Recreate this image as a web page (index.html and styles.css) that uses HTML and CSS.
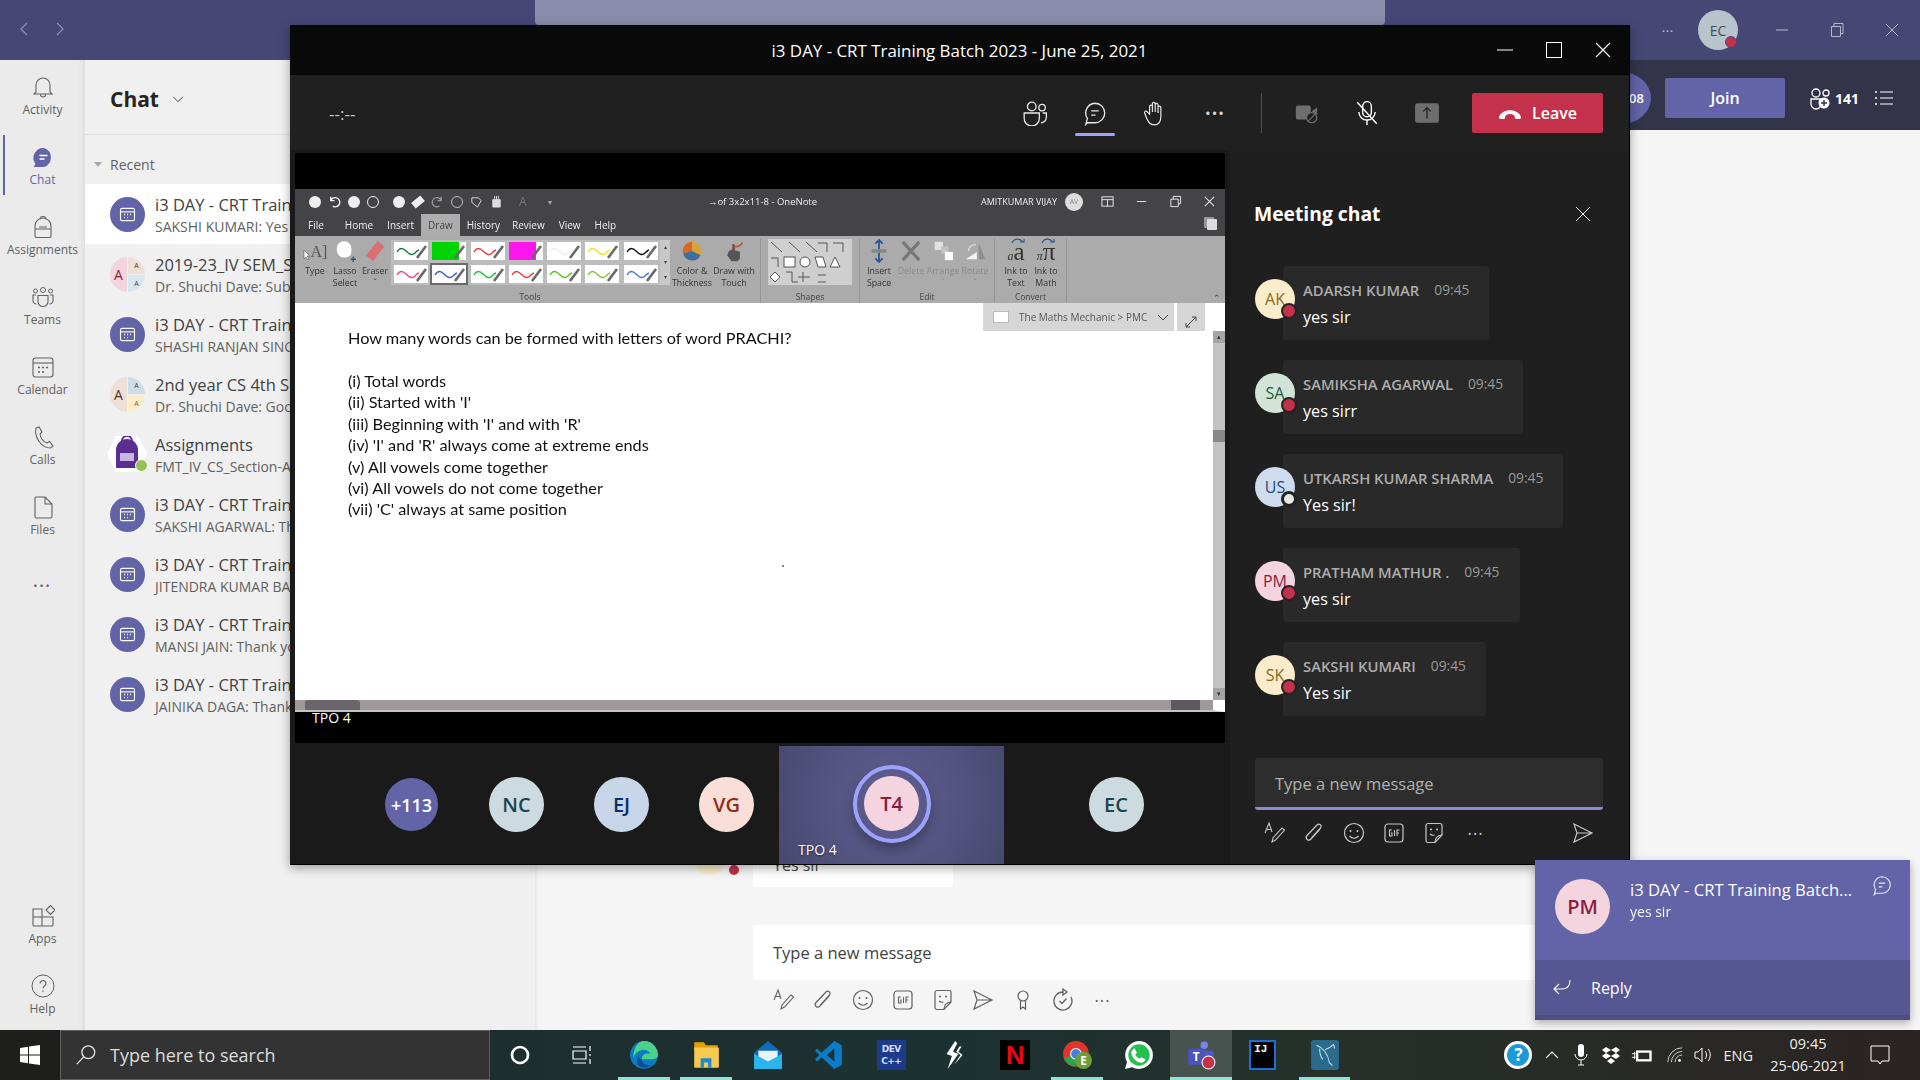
FILE: index.html
```html
<!DOCTYPE html>
<html lang="en">
<head>
<meta charset="utf-8">
<title>Microsoft Teams</title>
<link rel="stylesheet" href="styles.css">
</head>
<body>
<svg class="sprite" aria-hidden="true">
  <symbol id="cal" viewBox="0 0 24 24"><rect x="4" y="5" width="16" height="14" rx="2" fill="none" stroke="currentColor" stroke-width="1.3"/><path d="M4 9h16" stroke="currentColor" stroke-width="1.3"/><path d="M8 12h1M11.5 12h1M15 12h1M8 15.5h1M11.5 15.5h1" stroke="currentColor" stroke-width="1.5"/></symbol>
  <symbol id="chatb" viewBox="0 0 24 24"><path d="M12 3a9 9 0 0 1 0 18H5l-1.5 1.5L5 17a9 9 0 0 1 7-14z" fill="none" stroke="currentColor" stroke-width="1.2"/><path d="M8.5 10h7M8.5 14h4" stroke="currentColor" stroke-width="1.2"/></symbol>
  <symbol id="pen" viewBox="0 0 34 18"><path d="M3 10c3-5 6-4 9-1s6 5 9 2 3-3 4-3" fill="none" stroke="currentColor" stroke-width="1.4"/><path d="M23 16 32 4" stroke="#6a6a6a" stroke-width="2.6"/></symbol>
  <symbol id="format" viewBox="0 0 24 24"><path d="M3 12 7 2l3 9M4.500 8.500h4" fill="none" stroke="currentColor" stroke-width="1.1"/><path d="M10 21l1-4 9-10 2.500 2-9 10z" fill="none" stroke="currentColor" stroke-width="1.1"/></symbol>
  <symbol id="clip" viewBox="0 0 24 24"><path d="M18 8 9 18c-2.500 2.800-6.500-.5-4-3.500L15 4c2-2 5.500.5 3.500 3L9.500 17" fill="none" stroke="currentColor" stroke-width="1.2"/></symbol>
  <symbol id="smile" viewBox="0 0 24 24"><circle cx="12" cy="12" r="9.500" fill="none" stroke="currentColor" stroke-width="1.2"/><circle cx="8.500" cy="10" r="1" fill="currentColor"/><circle cx="15.500" cy="10" r="1" fill="currentColor"/><path d="M7.500 15c2.500 3 6.500 3 9 0" fill="none" stroke="currentColor" stroke-width="1.2"/></symbol>
  <symbol id="gif" viewBox="0 0 24 24"><rect x="3" y="3" width="18" height="18" rx="3" fill="none" stroke="currentColor" stroke-width="1.2"/><path d="M10 9H7.500v6H10v-3H9M12.500 9v6M15 15V9h2.500M15 12h2" fill="none" stroke="currentColor" stroke-width="1.1"/></symbol>
  <symbol id="sticker" viewBox="0 0 24 24"><path d="M6 2.500h12a2 2 0 0 1 2 2V14l-7 7.500H6a2 2 0 0 1-2-2v-15a2 2 0 0 1 2-2z" fill="none" stroke="currentColor" stroke-width="1.2"/><path d="M13 21.500c0-5 2-7 7-7.500" fill="none" stroke="currentColor" stroke-width="1.2"/><circle cx="9" cy="8.500" r="1" fill="currentColor"/><circle cx="15" cy="8.500" r="1" fill="currentColor"/><path d="M8 13c1.500 1.500 3 1.500 4.500 1" fill="none" stroke="currentColor" stroke-width="1.1"/></symbol>
  <symbol id="send" viewBox="0 0 24 24"><path d="M3 3 21 12 3 21l3-9zM6 12h15" fill="none" stroke="currentColor" stroke-width="1.2"/></symbol>
</svg>

<div class="app">
  <header class="topbar">
    <div class="nav-arrows">
      <svg viewBox="0 0 12 16" class="nav-ic"><path d="M9 2 3 8l6 6" fill="none" stroke="currentColor" stroke-width="1.200"/></svg>
      <svg viewBox="0 0 12 16" class="nav-ic"><path d="M3 2l6 6-6 6" fill="none" stroke="currentColor" stroke-width="1.200"/></svg>
    </div>
    <div class="searchbox"></div>
    <div class="top-right">
      <span class="top-dots">&#8226;&#8226;&#8226;</span>
      <span class="me-av">EC<i class="me-dot"></i></span>
      <svg viewBox="0 0 16 16" class="win-ic first"><path d="M2 8h12" stroke="currentColor"/></svg>
      <svg viewBox="0 0 16 16" class="win-ic"><path d="M2.500 4.500h9v10h-9zM5 4.500v-3h9v10h-2.500" fill="none" stroke="currentColor"/></svg>
      <svg viewBox="0 0 16 16" class="win-ic"><path d="M2 2l12 12M14 2 2 14" stroke="currentColor"/></svg>
    </div>
  </header>

  <div class="workspace">
    <nav class="rail">
      <a class="rail-item"><svg viewBox="0 0 24 24" class="rail-ic"><path d="M5 17V10a7 7 0 0 1 14 0v7l2 2H3zM9.500 19.500a2.500 2.500 0 0 0 5 0" fill="none" stroke="currentColor" stroke-width="1.100"/></svg><span>Activity</span></a>
      <a class="rail-item active"><svg viewBox="0 0 24 24" class="rail-ic"><path d="M13 3a10 10 0 0 1 0 19H2.500l2-3A10 10 0 0 1 13 3z" fill="#6264a7"/><path d="M8.500 10.500h8M8.500 14h5" stroke="#fff" stroke-width="1.300"/></svg><span>Chat</span></a>
      <a class="rail-item"><svg viewBox="0 0 24 24" class="rail-ic"><path d="M4 11a8 8 0 0 1 16 0v10a1.500 1.500 0 0 1-1.500 1.500h-13A1.500 1.500 0 0 1 4 21zM9 4.500a3 3 0 0 1 6 0M4 14h16M8 12h8" fill="none" stroke="currentColor" stroke-width="1.100"/></svg><span>Assignments</span></a>
      <a class="rail-item"><svg viewBox="0 0 24 24" class="rail-ic"><circle cx="12" cy="5" r="2.500" fill="none" stroke="currentColor"/><circle cx="4.500" cy="6" r="2" fill="none" stroke="currentColor"/><circle cx="19.500" cy="6" r="2" fill="none" stroke="currentColor"/><path d="M7 10.500h10v6a5 5 0 0 1-10 0zM5 10H2v6c0 1.500 1.500 3 3.500 3M19 10h3v6c0 1.500-1.500 3-3.500 3" fill="none" stroke="currentColor" stroke-width="1.100"/></svg><span>Teams</span></a>
      <a class="rail-item"><svg viewBox="0 0 24 24" class="rail-ic"><rect x="2" y="3" width="20" height="19" rx="2.500" fill="none" stroke="currentColor" stroke-width="1.100"/><path d="M2 8h20" stroke="currentColor" stroke-width="1.100"/><path d="M7 12.500h2M11 12.500h2M15 12.500h2M7 17h2M11 17h2" stroke="currentColor" stroke-width="1.600"/></svg><span>Calendar</span></a>
      <a class="rail-item"><svg viewBox="0 0 24 24" class="rail-ic"><path d="M5 3l3-1 3 5-2 2c.5 4 3 7.500 7 9l2.500-1.500 3.500 4.500-2.500 2C11 23 3 13 5 3z" fill="none" stroke="currentColor" stroke-width="1.100"/></svg><span>Calls</span></a>
      <a class="rail-item"><svg viewBox="0 0 24 24" class="rail-ic"><path d="M4 3.500A1.500 1.500 0 0 1 5.500 2H14l7 7v12.500a1.500 1.500 0 0 1-1.500 1.500h-14A1.500 1.500 0 0 1 4 21.500zM14 2v7h7" fill="none" stroke="currentColor" stroke-width="1.100"/></svg><span>Files</span></a>
      <a class="rail-dots">&#8226;&#8226;&#8226;</a>
      <div class="rail-spacer"></div>
      <a class="rail-item short"><svg viewBox="0 0 24 24" class="rail-ic"><path d="M2 5h9v17H3a1 1 0 0 1-1-1zM2 13h20v8a1 1 0 0 1-1 1H11M11 13v-2M15 6l4.500-4.500L24 6l-4.500 4.500z" fill="none" stroke="currentColor" stroke-width="1.100"/></svg><span>Apps</span></a>
      <a class="rail-item short"><svg viewBox="0 0 24 24" class="rail-ic"><circle cx="12" cy="12" r="11" fill="none" stroke="currentColor" stroke-width="1"/><path d="M9 9.500a3 3 0 1 1 4.500 2.600c-1 .6-1.500 1.200-1.500 2.400M12 16.500v1.500" fill="none" stroke="currentColor" stroke-width="1.100"/></svg><span>Help</span></a>
    </nav>

    <section class="list-col">
      <div class="list-head"><h1>Chat</h1><svg viewBox="0 0 16 16" class="chev"><path d="M2.500 5.500 8 11l5.500-5.500" fill="none" stroke="currentColor" stroke-width="1.100"/></svg></div>
      <div class="recent"><i class="tri"></i>Recent</div>
      <div class="row selected"><span class="av-cal"><svg class="cal-ic"><use href="#cal"/></svg></span><div class="row-text"><div class="row-title">i3 DAY - CRT Training Batch 2023</div><div class="row-sub">SAKSHI KUMARI: Yes sir</div></div></div>
      <div class="row"><span class="av-group"><b class="g-main pink">A</b><b class="g-a">A</b><b class="g-b">A</b></span><div class="row-text"><div class="row-title">2019-23_IV SEM_Section</div><div class="row-sub">Dr. Shuchi Dave: Submit</div></div></div>
      <div class="row"><span class="av-cal"><svg class="cal-ic"><use href="#cal"/></svg></span><div class="row-text"><div class="row-title">i3 DAY - CRT Training Batch 2023</div><div class="row-sub">SHASHI RANJAN SINGH: Thank you</div></div></div>
      <div class="row"><span class="av-group"><b class="g-main tan">A</b><b class="g-c">A</b><b class="g-d">A</b></span><div class="row-text"><div class="row-title">2nd year CS 4th Sem</div><div class="row-sub">Dr. Shuchi Dave: Good</div></div></div>
      <div class="row"><span class="av-hex"><svg viewBox="0 0 40 36" class="hex"><path d="M9 0h22l9 18-9 18H9L0 18z" fill="#fff"/><path d="M9 14a11 11 0 0 1 22 0v17a1 1 0 0 1-1 1H10a1 1 0 0 1-1-1z" fill="#5c2d91"/><path d="M15 5a5 5 0 0 1 10 0" fill="none" stroke="#5c2d91" stroke-width="2"/><path d="M13 17h14v8H13z" fill="#c8b6e2"/></svg><i class="hex-ok"></i></span><div class="row-text"><div class="row-title">Assignments</div><div class="row-sub">FMT_IV_CS_Section-A</div></div></div>
      <div class="row"><span class="av-cal"><svg class="cal-ic"><use href="#cal"/></svg></span><div class="row-text"><div class="row-title">i3 DAY - CRT Training Batch 2023</div><div class="row-sub">SAKSHI AGARWAL: Thank you</div></div></div>
      <div class="row"><span class="av-cal"><svg class="cal-ic"><use href="#cal"/></svg></span><div class="row-text"><div class="row-title">i3 DAY - CRT Training Batch 2023</div><div class="row-sub">JITENDRA KUMAR BAIRWA: Thank</div></div></div>
      <div class="row"><span class="av-cal"><svg class="cal-ic"><use href="#cal"/></svg></span><div class="row-text"><div class="row-title">i3 DAY - CRT Training Batch 2023</div><div class="row-sub">MANSI JAIN: Thank you sir</div></div></div>
      <div class="row"><span class="av-cal"><svg class="cal-ic"><use href="#cal"/></svg></span><div class="row-text"><div class="row-title">i3 DAY - CRT Training Batch 2023</div><div class="row-sub">JAINIKA DAGA: Thank you</div></div></div>
    </section>

    <main class="main">
      <div class="main-head">
        <span class="count-pill">108</span>
        <button class="join">Join</button>
        <svg viewBox="0 0 24 24" class="ppl-ic"><circle cx="8" cy="7" r="4" fill="none" stroke="currentColor" stroke-width="1.300"/><circle cx="18" cy="7" r="3" fill="none" stroke="currentColor" stroke-width="1.300"/><path d="M3 13h10v5a5 5 0 0 1-10 0z" fill="none" stroke="currentColor" stroke-width="1.300"/><circle cx="16" cy="17" r="5.500" fill="#fff"/><path d="M16 14v6M13 17h6" stroke="#33344a" stroke-width="1.400"/></svg>
        <b class="ppl-count">141</b>
        <svg viewBox="0 0 20 20" class="list-ic"><path d="M6 4h13M6 10h13M6 16h13" stroke="currentColor" stroke-width="1.200"/><path d="M1 4h2M1 10h2M1 16h2" stroke="currentColor" stroke-width="1.600"/></svg>
      </div>
      <div class="convo">
        <div class="msg-line"><span class="msg-av"><i class="msg-dot"></i></span><div class="msg-bubble">Yes sir</div></div>
        <div class="compose">Type a new message</div>
        <div class="compose-tools">
          <svg class="ct"><use href="#format"/></svg><svg class="ct"><use href="#clip"/></svg><svg class="ct"><use href="#smile"/></svg><svg class="ct"><use href="#gif"/></svg><svg class="ct"><use href="#sticker"/></svg><svg class="ct"><use href="#send"/></svg>
          <svg class="ct" viewBox="0 0 24 24"><circle cx="12" cy="8" r="5" fill="none" stroke="currentColor" stroke-width="1.200"/><path d="M9.500 12.500V21l2.500-2 2.500 2v-8.500" fill="none" stroke="currentColor" stroke-width="1.200"/></svg>
          <svg class="ct" viewBox="0 0 24 24"><path d="M12 4a9 9 0 1 0 8 5M12 1v6l4-3z" fill="none" stroke="currentColor" stroke-width="1.300"/><path d="M8.500 13l2.500 2.500 4.500-5" fill="none" stroke="currentColor" stroke-width="1.300"/></svg>
          <span class="ct-dots">&#8226;&#8226;&#8226;</span>
        </div>
      </div>
    </main>
  </div>

  <footer class="taskbar">
    <div class="start"><svg viewBox="0 0 20 20" class="win-logo"><path d="M0 3l8-1.200V9.500H0zM9 1.600 20 0v9.500H9zM0 10.500h8v7.700L0 17zM9 10.500h11V20L9 18.400z" fill="#fff"/></svg></div>
    <div class="tb-search"><svg viewBox="0 0 24 24" class="tb-mag"><circle cx="14.500" cy="9" r="7" fill="none" stroke="currentColor" stroke-width="1.400"/><path d="M9.500 14 2 22" stroke="currentColor" stroke-width="1.400"/></svg><span>Type here to search</span></div>
    <div class="tb-apps">
      <span class="tb-app"><svg viewBox="0 0 24 24" class="tb-ic"><circle cx="12" cy="12" r="8" fill="none" stroke="#fff" stroke-width="2.600"/></svg></span>
      <span class="tb-app"><svg viewBox="0 0 24 24" class="tb-ic"><path d="M3 4h13M3 20h13M3 8h13v8H3zM20 3v5M20 11v2M20 16v5" fill="none" stroke="#fff" stroke-width="1.200"/></svg></span>
      <span class="tb-app open"><svg viewBox="0 0 28 28" class="tb-ic big"><circle cx="14" cy="14" r="13" fill="#0c7bc5"/><path d="M14 1a13 13 0 0 1 13 13c0 3-3 4-6 4H12c0-5 4-6 8-5-1-3-4-4-6-4-5 0-9 4-10 8C4 8 8 1 14 1z" fill="#4ad28a"/><path d="M12 18c0 4 4 6 9 5-4 4-9 3-12 1-2-2-2-6 0-9 0 2 1 3 3 3z" fill="#0a4f8f"/></svg></span>
      <span class="tb-app open"><svg viewBox="0 0 28 28" class="tb-ic big"><path d="M3 2h9l2 3h11v4H3z" fill="#e2a100"/><path d="M3 7h22a1 1 0 0 1 1 1v17a1 1 0 0 1-1 1H4a1 1 0 0 1-1-1z" fill="#f7ca4f"/><path d="M9 26v-9h10v9h-3v-5h-4v5z" fill="#1e88d8"/></svg></span>
      <span class="tb-app"><svg viewBox="0 0 28 28" class="tb-ic big"><path d="M14 1 27 12v15H1V12z" fill="#0f6cbd"/><path d="M5 10h18v6l-9 5-9-5z" fill="#e8f4fc"/><path d="M1 13l13 7 13-7v14H1z" fill="#2ab6ec"/></svg></span>
      <span class="tb-app"><svg viewBox="0 0 28 28" class="tb-ic big"><path d="M19 1l7 4v18l-7 4L7 16l-4 4-2-2 4-4-4-4 2-2 4 4zM19 8l-7 6 7 6z" fill="#0a7cc8" fill-rule="evenodd"/></svg></span>
      <span class="tb-app"><span class="dev">DEV<br>C++</span></span>
      <span class="tb-app"><svg viewBox="0 0 28 28" class="tb-ic big"><path d="M16 1 8 13l5 2-4 12 10-14-5-2 4-8zM20 6l-3 5 4 3-6 9 8-9-4-3 3-5z" fill="#fff"/></svg></span>
      <span class="tb-app"><span class="netflix">N</span></span>
      <span class="tb-app open"><svg viewBox="0 0 28 28" class="tb-ic big"><circle cx="13" cy="13" r="12" fill="#e0352b"/><path d="M13 13 2 17A12 12 0 0 0 12 25z" fill="#2ba24c"/><path d="M13 13h12a12 12 0 0 1-7 11z" fill="#f6c21b"/><circle cx="13" cy="13" r="5" fill="#3f80ea" stroke="#fff"/><circle cx="20" cy="19" r="8" fill="#6a9f3c"/><text x="20" y="23" class="chrome-e">E</text></svg></span>
      <span class="tb-app"><svg viewBox="0 0 28 28" class="tb-ic big"><path d="M14 1a13 13 0 0 1 0 26c-2.500 0-4.500-.5-6.500-1.500L1 27l1.800-6.500A13 13 0 0 1 14 1z" fill="#fff"/><circle cx="14" cy="14" r="10" fill="#25c14f"/><path d="M10 8l2 4-1.500 1.500c1 2 2 3 4 4L16 16l4 2c-.5 2.500-3 3.500-5 3-4-1-7-4-8-8-.5-2 1-4.500 3-5z" fill="#fff"/></svg></span>
      <span class="tb-app current"><svg viewBox="0 0 28 28" class="tb-ic big"><circle cx="17" cy="5" r="3.500" fill="#7b83eb"/><rect x="14" y="10" width="12" height="12" rx="3" fill="#5059c9"/><rect x="2" y="8" width="15" height="15" rx="2" fill="#4b53bc"/><text x="9.500" y="20" class="teams-t">T</text><circle cx="21" cy="21" r="6" fill="#c4314b" stroke="#fff"/></svg></span>
      <span class="tb-app"><span class="idea">IJ</span></span>
      <span class="tb-app open"><svg viewBox="0 0 28 28" class="tb-ic big"><rect x="1" y="0" width="26" height="28" rx="3" fill="#2a6a8d"/><path d="M6 5c6 2 11 8 12 16M18 21l3 3M14 9c3-1 6-3 8-5M22 4l1 4M9 8c0 5 1 8 3 10" fill="none" stroke="#c8dbe6" stroke-width="1"/></svg></span>
    </div>
    <div class="tray">
      <span class="help-ball">?</span>
      <svg viewBox="0 0 16 16" class="tr-ic caret"><path d="M2 11l6-6 6 6" fill="none" stroke="#fff" stroke-width="1.100"/></svg>
      <svg viewBox="0 0 16 24" class="tr-ic mic"><rect x="5" y="1" width="6" height="13" rx="3" fill="#fff"/><path d="M2 11a6 6 0 0 0 12 0M8 17v5M5 22h6" fill="none" stroke="#fff"/></svg>
      <svg viewBox="0 0 20 20" class="tr-ic drop"><path d="M5 2l5 3-5 3-4-3zM15 2l4 3-4 3-5-3zM5 8l5 3-5 3-4-3zM15 8l4 3-4 3-5-3zM10 13l4 3-4 3-4-3z" fill="#fff"/></svg>
      <svg viewBox="0 0 24 18" class="tr-ic batt"><rect x="6" y="4" width="16" height="11" fill="#fff" stroke="#fff"/><rect x="8" y="6" width="12" height="7" fill="#2a2a28"/><path d="M1 7h4M1 11h4M4 5v8" stroke="#fff"/></svg>
      <svg viewBox="0 0 20 20" class="tr-ic wifi"><path d="M2 18A16 16 0 0 1 18 2M6 18A12 12 0 0 1 18 6M10 18a8 8 0 0 1 8-8" fill="none" stroke="#ddd" stroke-width="1"/><circle cx="15" cy="16" r="1.500" fill="#fff"/></svg>
      <svg viewBox="0 0 20 20" class="tr-ic spk"><path d="M2 7h3l4-4v14l-4-4H2zM12 6c2 2 2 6 0 8M15 4c3 3 3 9 0 12" fill="none" stroke="#fff"/></svg>
      <span class="eng">ENG</span>
      <span class="clock"><span>09:45</span><span>25-06-2021</span></span>
      <svg viewBox="0 0 20 20" class="tr-ic notif"><path d="M1 1h18v15h-7l-2 3-2-3H1z" fill="none" stroke="#fff"/></svg>
    </div>
  </footer>
</div>

<!-- meeting window -->
<div class="meeting">
  <div class="m-title">
    <span class="m-title-text">i3 DAY - CRT Training Batch 2023 - June 25, 2021</span>
    <div class="m-win">
      <svg viewBox="0 0 16 16" class="mw"><path d="M0 8h16" stroke="#fff"/></svg>
      <svg viewBox="0 0 16 16" class="mw"><rect x=".5" y=".5" width="15" height="15" fill="none" stroke="#fff"/></svg>
      <svg viewBox="0 0 16 16" class="mw"><path d="M1 1l14 14M15 1 1 15" stroke="#fff" stroke-width="1.100"/></svg>
    </div>
  </div>
  <div class="m-tools">
    <span class="timer">--:--</span>
    <div class="tb-group">
      <span class="tbtn"><svg viewBox="0 0 24 24" class="tsvg"><circle cx="9" cy="6" r="4" fill="none" stroke="currentColor" stroke-width="1.200"/><circle cx="18.500" cy="7" r="3" fill="none" stroke="currentColor" stroke-width="1.200"/><path d="M2 12h14v5a7 7 0 0 1-14 0zM19 12h3.500v4c0 3-2.500 5-5 5" fill="none" stroke="currentColor" stroke-width="1.200"/></svg></span>
      <span class="tbtn active"><svg class="tsvg"><use href="#chatb"/></svg></span>
      <span class="tbtn"><svg viewBox="0 0 24 24" class="tsvg"><path d="M7 13V6a1.300 1.300 0 0 1 2.600 0v5V3.500a1.300 1.300 0 0 1 2.600 0V11 4.500a1.300 1.300 0 0 1 2.600 0V12 7a1.300 1.300 0 0 1 2.600 0v8c0 5-2 8-6 8s-5-2-7-6l-2-5c-.5-1.500 1.500-2.500 2.500-1z" fill="none" stroke="currentColor" stroke-width="1.100"/></svg></span>
      <span class="tbtn"><span class="tdots">&#8226;&#8226;&#8226;</span></span>
    </div>
    <span class="tdiv"></span>
    <div class="tb-group second">
      <span class="tbtn dim"><svg viewBox="0 0 28 24" class="tsvg"><rect x="2" y="4" width="16" height="15" rx="2" fill="currentColor"/><path d="M19 10l6-4v8z" fill="currentColor"/><circle cx="19" cy="17" r="5.500" fill="#202020" stroke="currentColor" stroke-width="1.300"/><path d="M15.500 20.500l7-7" stroke="currentColor" stroke-width="1.300"/></svg></span>
      <span class="tbtn white"><svg viewBox="0 0 24 24" class="tsvg"><rect x="8" y="1.500" width="8" height="14" rx="4" fill="none" stroke="currentColor" stroke-width="1.300"/><path d="M4.500 11a7.500 7.500 0 0 0 15 0M12 18.500V23M3 2l18 20" fill="none" stroke="currentColor" stroke-width="1.300"/></svg></span>
      <span class="tbtn dim"><svg viewBox="0 0 24 24" class="tsvg"><rect x="1" y="3" width="22" height="18" rx="2" fill="currentColor"/><path d="M12 17V7M8.500 10.500 12 7l3.500 3.500" fill="none" stroke="#202020" stroke-width="1.200"/></svg></span>
    </div>
    <button class="leave"><svg viewBox="0 0 24 14" class="hang"><path d="M1 11C4 2 20 2 23 11c0 1.500-.5 2-2 2h-2.500c-1 0-1.500-.5-1.500-1.500 0-2-2-3.500-5-3.500S7 9.500 7 11.500C7 12.500 6.500 13 5.500 13H3c-1.500 0-2-.5-2-2z" fill="#fff"/></svg>Leave</button>
  </div>

  <div class="m-body">
    <div class="stage">
      <div class="video">
        <div class="onenote">
          <div class="on-title">
            <div class="qa">
              <i class="q round"></i><svg viewBox="0 0 14 14" class="q-ic"><path d="M3 2v4h4M3 6a5 5 0 1 1 2 6" fill="none" stroke="#fff" stroke-width="1.400"/></svg><i class="q round"></i><i class="q circ"></i><i class="q round wide-l"></i><i class="q eraser"></i><svg viewBox="0 0 14 14" class="q-ic"><path d="M11 2v4H7M11 6a5 5 0 1 0-2 6" fill="none" stroke="#999" stroke-width="1.400"/></svg><i class="q circ thin"></i><svg viewBox="0 0 14 14" class="q-ic"><path d="M2 3h7l3 3-4 7-6-5z" fill="none" stroke="#ddd"/></svg><svg viewBox="0 0 14 14" class="q-ic"><path d="M3 13V5h8v8zM5 5V1M7 5V1M9 5V1" fill="#ddd" stroke="#ddd"/></svg><span class="q-a">A</span><span class="q-caret">&#9662;</span>
            </div>
            <div class="on-name">&#8594;of 3x2x11-8 - OneNote</div>
            <div class="on-user">
              <span>AMITKUMAR VIJAY</span><span class="on-av">AV</span>
              <svg viewBox="0 0 14 14" class="on-w f"><rect x="1" y="2" width="12" height="10" fill="none" stroke="#eee"/><path d="M1 5h12M7 5v7" stroke="#eee"/></svg>
              <svg viewBox="0 0 14 14" class="on-w"><path d="M2 7h10" stroke="#eee"/></svg>
              <svg viewBox="0 0 14 14" class="on-w"><path d="M2 4.500h8v8H2zM4.500 4.500v-3h8v8H10" fill="none" stroke="#eee"/></svg>
              <svg viewBox="0 0 14 14" class="on-w"><path d="M2 2l10 10M12 2 2 12" stroke="#eee" stroke-width="1.100"/></svg>
            </div>
          </div>
          <div class="on-tabs">
            <span class="tab t-file">File</span><span class="tab">Home</span><span class="tab">Insert</span><span class="tab on">Draw</span><span class="tab t-hist">History</span><span class="tab">Review</span><span class="tab">View</span><span class="tab">Help</span>
            <i class="tab-share"></i>
          </div>
          <div class="ribbon">
            <div class="rg rg-tools">
              <div class="rg-body">
                <div class="ri"><span class="ri-type"><svg viewBox="0 0 8 12" class="cursor"><path d="M1 1v9l2-2 2 3 1-1-2-3h3z" fill="#fff" stroke="#555" stroke-width=".6"/></svg>A]</span><span>Type</span></div>
                <div class="ri"><svg viewBox="0 0 24 26" class="ri-ic"><path d="M8 3c6-2 11 2 11 8s-1 8-6 9c-6 1-10-3-10-9 0-4 2-7 5-8z" fill="#fff"/><path d="M18 22h6M21 19v6" stroke="#2b579a" stroke-width="1.500"/></svg><span>Lasso<br>Select</span></div>
                <div class="ri"><svg viewBox="0 0 24 26" class="ri-ic"><path d="M15 2l7 6-12 16-8-6z" fill="#dc6f74"/></svg><span>Eraser<br>&#711;</span></div>
                <div class="gallery">
                  <svg class="p c1"><use href="#pen"/></svg><span class="p-wrap hl-g"><svg class="p c0"><use href="#pen"/></svg></span><svg class="p c3"><use href="#pen"/></svg><span class="p-wrap hl-m"><svg class="p c0"><use href="#pen"/></svg></span><svg class="p c5"><use href="#pen"/></svg><svg class="p c6"><use href="#pen"/></svg><svg class="p c7"><use href="#pen"/></svg>
                  <svg class="p c8"><use href="#pen"/></svg><svg class="p c9 sel"><use href="#pen"/></svg><svg class="p c10"><use href="#pen"/></svg><svg class="p c3"><use href="#pen"/></svg><svg class="p c11"><use href="#pen"/></svg><svg class="p c12"><use href="#pen"/></svg><svg class="p c13"><use href="#pen"/></svg>
                </div>
                <div class="g-scroll"><i>&#9652;</i><i>&#9662;</i><i>&#9662;</i></div>
                <div class="ri wide"><svg viewBox="0 0 26 26" class="ri-ic"><circle cx="13" cy="13" r="11" fill="#d9a33a"/><path d="M13 13V2A11 11 0 0 0 2.500 16z" fill="#d9672b"/><path d="M13 13 2.500 16A11 11 0 0 0 23 18z" fill="#3e6f9e"/></svg><span>Color &amp;<br>Thickness</span></div>
                <div class="ri wide2"><svg viewBox="0 0 26 26" class="ri-ic"><path d="M7 13l4-2V5h3v7l6 2v8l-3 3H10l-5-7z" fill="#555"/><path d="M13 8c5 0 8-1 10-5" fill="none" stroke="#c8502f" stroke-width="2"/></svg><span>Draw with<br>Touch</span></div>
              </div>
              <div class="rg-label">Tools</div>
            </div>
            <div class="rg rg-shapes">
              <div class="rg-body center">
                <svg viewBox="0 0 84 46" class="shapes"><rect width="84" height="46" fill="#cfcfcf"/><path d="M3 3l11 10M21 3l11 10M38 3l11 10M50 4h9v9M65 4h10v9" fill="none" stroke="#555"/><path d="M3 19h7v9" fill="none" stroke="#555"/><rect x="16" y="18" width="11" height="10" fill="#fff" stroke="#555"/><circle cx="37" cy="23" r="5" fill="#fff" stroke="#555"/><path d="M47 18h8l3 10h-8zM62 28l5-10 5 10z" fill="#fff" stroke="#555"/><path d="M7 33l5 5-5 5-5-5z" fill="#fff" stroke="#555"/><path d="M18 33h6v10h6M35 33v10M30 38h12M50 36h8M50 43h8" fill="none" stroke="#555"/></svg>
              </div>
              <div class="rg-label">Shapes</div>
            </div>
            <div class="rg rg-edit">
              <div class="rg-body pad-e">
                <div class="ri r31"><svg viewBox="0 0 24 26" class="ri-ic"><path d="M12 1v10M8 5l4-4 4 4M12 25V15M8 21l4 4 4-4" fill="none" stroke="#2b579a" stroke-width="2"/><path d="M4 12h16M4 14h16" stroke="#666"/></svg><span>Insert<br>Space</span></div>
                <div class="ri r31 off"><svg viewBox="0 0 24 26" class="ri-ic"><path d="M3 3l18 20M21 3 3 23" stroke="#777" stroke-width="3.500"/></svg><span>Delete</span></div>
                <div class="ri r31 off"><svg viewBox="0 0 24 26" class="ri-ic"><rect x="3" y="3" width="9" height="9" fill="#e2e2e2"/><rect x="10" y="8" width="8" height="8" fill="#c2c2c2"/><rect x="14" y="14" width="9" height="9" fill="#fff"/></svg><span>Arrange<br>&#711;</span></div>
                <div class="ri r31 off"><svg viewBox="0 0 24 26" class="ri-ic"><path d="M16 4l7 18h-7z" fill="#8e8e8e"/><path d="M2 22l12-8v8z" fill="#f2f2f2"/><path d="M5 13c0-5 4-7 8-7" fill="none" stroke="#ddd" stroke-width="1.500"/></svg><span>Rotate<br>&#711;</span></div>
              </div>
              <div class="rg-label">Edit</div>
            </div>
            <div class="rg rg-convert">
              <div class="rg-body pad-c">
                <div class="ri r30"><span class="ink"><svg viewBox="0 0 14 6" class="ink-arc"><path d="M1 5c2-5 8-5 11-1M9 4h4V1" fill="none" stroke="#2b579a" stroke-width="1.200"/></svg><i>a</i>a</span><span>Ink to<br>Text</span></div>
                <div class="ri r30"><span class="ink"><svg viewBox="0 0 14 6" class="ink-arc"><path d="M1 5c2-5 8-5 11-1M9 4h4V1" fill="none" stroke="#2b579a" stroke-width="1.200"/></svg><i>&#960;</i>&#960;</span><span>Ink to<br>Math</span></div>
              </div>
              <div class="rg-label">Convert</div>
            </div>
            <span class="rb-collapse">&#8963;</span>
          </div>
          <div class="on-page">
            <div class="note-text">
              <p class="q-line">How many words can be formed with letters of word PRACHI?</p>
              <p>(i) Total words</p>
              <p>(ii) Started with 'I'</p>
              <p>(iii) Beginning with 'I' and with 'R'</p>
              <p>(iv) 'I' and 'R' always come at extreme ends</p>
              <p>(v) All vowels come together</p>
              <p>(vi) All vowels do not come together</p>
              <p>(vii) 'C' always at same position</p>
            </div>
            <div class="nb-tag"><span class="nb-book"></span><span class="nb-name">The Maths Mechanic &gt; PMC</span><svg viewBox="0 0 12 12" class="nb-chev"><path d="M1 4l5 5 5-5" fill="none" stroke="#444"/></svg></div>
            <div class="nb-exp"><svg viewBox="0 0 12 12" class="nb-chev"><path d="M1 11 11 1M7 1h4v4M1 7v4h4" fill="none" stroke="#444"/></svg></div>
            <div class="vscroll"><i class="v-btn">&#9652;</i><i class="v-thumb"></i><i class="v-btn end">&#9662;</i></div>
            <i class="dot-mark"></i>
          </div>
          <div class="hscroll"><i class="h-thumb-l"></i><i class="h-thumb"></i></div>
        </div>
        <div class="video-name">TPO 4</div>
      </div>
      <div class="strip">
        <span class="slot"><span class="pav more">+113</span></span>
        <span class="slot"><span class="pav nc">NC</span></span>
        <span class="slot"><span class="pav ej">EJ</span></span>
        <span class="slot"><span class="pav vg">VG</span></span>
        <span class="tile"><span class="spk-ring"><span class="pav t4">T4</span></span><span class="tile-name">TPO 4</span></span>
        <span class="slot last"><span class="pav ec">EC</span></span>
      </div>
    </div>

    <aside class="mchat">
      <div class="mc-head"><h2>Meeting chat</h2><svg viewBox="0 0 16 16" class="mc-x"><path d="M1 1l14 14M15 1 1 15" stroke="#eee"/></svg></div>
      <div class="mc-list">
        <div class="mc-msg"><span class="mc-av ak">AK<i class="busy"></i></span><div class="mc-bub"><div class="mc-meta"><b>ADARSH KUMAR</b><span>09:45</span></div><div class="mc-text">yes sir</div></div></div>
        <div class="mc-msg"><span class="mc-av sa">SA<i class="busy"></i></span><div class="mc-bub"><div class="mc-meta"><b>SAMIKSHA AGARWAL</b><span>09:45</span></div><div class="mc-text">yes sirr</div></div></div>
        <div class="mc-msg"><span class="mc-av us">US<i class="off-st"></i></span><div class="mc-bub"><div class="mc-meta"><b>UTKARSH KUMAR SHARMA</b><span>09:45</span></div><div class="mc-text">Yes sir!</div></div></div>
        <div class="mc-msg"><span class="mc-av pm">PM<i class="busy"></i></span><div class="mc-bub"><div class="mc-meta"><b>PRATHAM MATHUR .</b><span>09:45</span></div><div class="mc-text">yes sir</div></div></div>
        <div class="mc-msg"><span class="mc-av sk">SK<i class="busy"></i></span><div class="mc-bub"><div class="mc-meta"><b>SAKSHI KUMARI</b><span>09:45</span></div><div class="mc-text">Yes sir</div></div></div>
      </div>
      <div class="mc-input">Type a new message</div>
      <div class="mc-tools">
        <svg class="mt"><use href="#format"/></svg><svg class="mt"><use href="#clip"/></svg><svg class="mt"><use href="#smile"/></svg><svg class="mt"><use href="#gif"/></svg><svg class="mt"><use href="#sticker"/></svg><span class="mt-dots">&#8226;&#8226;&#8226;</span><svg class="mt-send"><use href="#send"/></svg>
      </div>
    </aside>
  </div>
</div>

<!-- toast -->
<div class="toast">
  <div class="toast-main">
    <span class="toast-av">PM</span>
    <div class="toast-text"><div class="toast-title">i3 DAY - CRT Training Batch...</div><div class="toast-sub">yes sir</div></div>
    <svg class="toast-ic"><use href="#chatb"/></svg>
  </div>
  <div class="toast-reply"><svg viewBox="0 0 20 20" class="reply-ic"><path d="M18 2c0 6-3 9-8 9H2M7 6l-5 5 5 5" fill="none" stroke="currentColor" stroke-width="1.100"/></svg>Reply</div>
</div>
</body>
</html>
```
FILE: styles.css
```css
* { box-sizing: border-box; }
html, body { margin: 0; padding: 0; width: 1920px; height: 1080px; overflow: hidden; }
body { font-family: "Open Sans", "Noto Sans", sans-serif; color: #252423; background: #f5f5f5; }
.sprite { width: 0; height: 0; position: absolute; }
i { font-style: normal; }
h1, h2, p { margin: 0; }

.app { display: grid; grid-template-rows: 60px 1fr 50px; height: 1080px; }

/* top bar */
.topbar { background: #464775; display: flex; align-items: flex-start; color: #c8c8dc; }
.nav-arrows { display: flex; gap: 24px; padding: 21px 0 0 18px; width: 535px; }
.nav-ic { width: 12px; height: 16px; color: #8f8fb4; }
.searchbox { width: 850px; height: 25px; background: #8b8cab; border-radius: 0 0 4px 4px; }
.top-right { flex: 1; display: flex; align-items: center; height: 60px; color: #b5b5cc; padding-left: 282px; }
.top-dots { font-size: 8px; letter-spacing: 1px; width: 36px; margin-left: -5px; }
.me-av { position: relative; width: 40px; height: 40px; border-radius: 50%; background: #b9c3cb; color: #3d5058; font-size: 14px; display: flex; align-items: center; justify-content: center; }
.me-dot { position: absolute; right: 1px; bottom: 2px; width: 12px; height: 12px; border-radius: 50%; background: #c4314b; border: 1px solid #464775; }
.win-ic { width: 16px; height: 16px; margin-left: 39px; flex: none; }
.win-ic.first { margin-left: 36px; }

/* workspace */
.workspace { display: grid; grid-template-columns: 85px 450px 1fr; min-height: 0; }
.rail { background: #ebebeb; box-shadow: inset -6px 0 6px -6px #d0d0d0; display: flex; flex-direction: column; padding-top: 5px; }
.rail-item { height: 70px; display: flex; flex-direction: column; align-items: center; justify-content: flex-start; padding-top: 10px; font-size: 12px; color: #616161; line-height: 16px; position: relative; }
.rail-item span { margin-top: 3px; }
.rail-ic { width: 24px; height: 24px; }
.rail-item.active { color: #6264a7; }
.rail-item.active::before { content: ""; position: absolute; left: 3px; top: 0; bottom: 10px; width: 2px; background: #6264a7; }
.rail-dots { text-align: center; font-size: 11px; letter-spacing: 2px; color: #616161; margin-top: 21px; height: 20px; line-height: 20px; }
.rail-spacer { flex: 1; }
.rail-item.short { height: 70px; }
.rail-item.short:last-child { height: 66px; }

/* list */
.list-col { background: #f0f0f0; display: flex; flex-direction: column; overflow: hidden; }
.list-head { height: 75px; border-bottom: 1px solid #e1dfdd; display: flex; align-items: center; padding: 3px 0 0 25px; flex: none; }
.list-head h1 { font-size: 21px; font-weight: 700; line-height: 30px; }
.chev { width: 14px; height: 14px; margin-left: 12px; color: #444; }
.recent { height: 49px; display: flex; align-items: center; font-size: 14px; color: #616161; padding: 10px 0 0 25px; flex: none; position: relative; }
.tri { position: absolute; left: 9px; top: 27px; border: 4.500px solid transparent; border-top: 5px solid #a8a8a8; }
.row { height: 60px; display: flex; align-items: center; padding-left: 25px; gap: 10px; flex: none; overflow: hidden; }
.row.selected { background: #fff; }
.row-text { white-space: nowrap; flex: none; padding-top: 2px; }
.row-title { font-size: 16.500px; line-height: 21px; color: #424242; }
.row-sub { font-size: 14px; line-height: 19px; color: #616161; margin-top: 2px; }
.av-cal { width: 35px; height: 35px; border-radius: 50%; background: #6264a7; display: flex; align-items: center; justify-content: center; color: #fff; flex: none; }
.cal-ic { width: 21px; height: 21px; }
.av-group { width: 35px; height: 35px; border-radius: 50%; overflow: hidden; display: grid; grid-template-columns: 17px 17px; grid-template-rows: 17px 17px; gap: 1px; background: #f0f0f0; flex: none; font-weight: 400; }
.av-group b { display: flex; align-items: center; justify-content: center; font-size: 7px; font-weight: 400; }
.av-group .g-main { grid-row: 1 / 3; font-size: 14px; }
.pink { background: #f4d5df; color: #8a1c3d; }
.tan { background: #efdfd9; color: #5c2e1e; }
.g-a { background: #efe0da; color: #5c2e1e; }
.g-b { background: #d8e6ee; color: #1f4e63; }
.g-c { background: #cfdde6; color: #1f4e63; }
.g-d { background: #fbeccb; color: #8a5a1c; }
.av-hex { width: 36px; height: 36px; position: relative; flex: none; margin-left: -1px; margin-right: 0; }
.hex { width: 40px; height: 36px; display: block; margin-left: -2px; }
.hex-ok { position: absolute; right: -3px; bottom: 0; width: 13px; height: 13px; border-radius: 50%; background: #92c353; border: 1px solid #fff; }

/* main */
.main { background: #f5f5f5; box-shadow: inset 4px 0 4px -4px #d8d8d8; display: flex; flex-direction: column; min-width: 0; }
.main-head { height: 70px; background: #33344a; display: flex; align-items: center; justify-content: flex-end; color: #fff; padding: 6px 26px 0 0; flex: none; }
.count-pill { width: 60px; height: 52px; border-radius: 50%; background: #6264a7; font-size: 13px; display: flex; align-items: center; justify-content: flex-end; padding-right: 7px; font-weight: 600; margin-right: 14px; }
.join { width: 120px; height: 40px; background: #6264a7; border: 0; border-radius: 2px; color: #fff; font: 600 16px "Open Sans", sans-serif; margin-right: 23px; }
.ppl-ic { width: 24px; height: 24px; color: #fff; }
.ppl-count { font-size: 14px; font-weight: 700; margin: 0 15px 0 3px; }
.list-ic { width: 20px; height: 20px; }
.convo { flex: 1; display: flex; flex-direction: column; padding: 0 0 10px 218px; justify-content: flex-end; }
.msg-line { display: flex; position: relative; }
.msg-av { width: 32px; height: 32px; border-radius: 50%; background: #fbeccb; position: absolute; left: -59px; top: -8px; }
.msg-dot { position: absolute; left: 35px; top: 22px; width: 10px; height: 10px; border-radius: 50%; background: #c4314b; }
.msg-bubble { width: 200px; height: 36px; background: #fff; border-radius: 3px; font-size: 16px; padding: 3px 0 0 20px; line-height: 22px; color: #424242; }
.compose { margin-top: 38px; height: 55px; width: 1130px; background: #fff; border-radius: 3px; padding-left: 20px; display: flex; align-items: center; font-size: 16.500px; color: #424242; }
.compose-tools { height: 40px; display: flex; align-items: center; gap: 16px; padding: 0 0 0 18px; color: #616161; }
.ct { width: 24px; height: 24px; flex: none; }
.ct-dots { font-size: 9px; letter-spacing: 2px; width: 24px; text-align: center; }

/* taskbar */
.taskbar { background: linear-gradient(90deg, #1f2a2a, #1c3232 50%, #263029 70%, #2b2422); display: flex; align-items: stretch; color: #fff; }
.start { width: 60px; background: #1e1e1c; display: flex; align-items: center; justify-content: center; flex: none; }
.win-logo { width: 20px; height: 20px; }
.tb-search { width: 430px; background: #333; border: 1px solid #5e5e5e; display: flex; align-items: center; padding-left: 14px; font-size: 18px; color: #ddd; flex: none; gap: 13px; }
.tb-mag { width: 22px; height: 22px; color: #e8e8e8; flex: none; }
.tb-apps { display: flex; margin-left: -1px; }
.tb-app { width: 61.900px; display: flex; align-items: center; justify-content: center; position: relative; flex: none; height: 50px; }
.tb-app.open::after, .tb-app.current::after { content: ""; position: absolute; left: 5px; right: 5px; bottom: 0; height: 3px; background: #8de4d4; }
.tb-app.current { background: #48524f; }
.tb-app.current::after { left: 0; right: 0; }
.tb-ic { width: 24px; height: 24px; }
.tb-ic.big { width: 30px; height: 30px; }
.dev { width: 29px; height: 30px; background: #1e3a8a; color: #cfe0ff; font-size: 9px; line-height: 12px; font-weight: 700; text-align: center; padding-top: 3px; font-family: "DejaVu Sans", sans-serif; letter-spacing: -.5px; }
.netflix { width: 30px; height: 30px; background: #000; color: #e50914; font: 700 26px/30px "Liberation Sans", sans-serif; text-align: center; }
.chrome-e { fill: #fff; font: 700 11px "Open Sans", sans-serif; text-anchor: middle; }
.teams-t { fill: #fff; font: 700 11px "Open Sans", sans-serif; text-anchor: middle; }
.idea { width: 27px; height: 30px; background: #000; border: 2px solid #1c6ed8; color: #fff; font: 700 11px/14px "Liberation Mono", monospace; padding-left: 3px; }
.tray { flex: 1; display: flex; align-items: center; padding-left: 149px; min-width: 0; }
.help-ball { width: 28px; height: 28px; border-radius: 50%; background: #1b9ad6; border: 3px solid #fff; color: #fff; font: 700 17px/22px "Open Sans", sans-serif; text-align: center; flex: none; }
.tr-ic { flex: none; }
.caret { width: 16px; height: 16px; margin-left: 12px; }
.mic { width: 16px; height: 24px; margin-left: 13px; }
.drop { width: 20px; height: 20px; margin-left: 12px; }
.batt { width: 22px; height: 17px; margin-left: 10px; }
.wifi { width: 18px; height: 20px; margin-left: 13px; }
.spk { width: 20px; height: 20px; margin-left: 9px; }
.eng { font-size: 14.500px; margin-left: 10px; color: #eee; }
.clock { display: flex; flex-direction: column; align-items: center; font-size: 14.500px; line-height: 22px; margin-left: 14px; color: #eee; width: 82px; }
.notif { width: 20px; height: 20px; margin-left: 21px; }

/* meeting window */
.meeting { position: absolute; left: 290px; top: 25px; width: 1340px; height: 840px; background: #1f1f1f; box-shadow: 0 3px 10px rgba(0,0,0,.35); display: flex; flex-direction: column; border-right: 1px solid #000; border-bottom: 1px solid #000; }
.m-title { height: 50px; background: #0a0a0a; display: flex; align-items: center; justify-content: center; position: relative; color: #fff; flex: none; border-bottom: 1px solid #000; }
.m-title-text { font-size: 16.900px; padding-top: 2px; }
.m-win { position: absolute; right: 18px; top: 17px; display: flex; gap: 33px; }
.mw { width: 16px; height: 16px; }
.m-tools { height: 75px; display: flex; align-items: center; background: #202020; padding: 0 0 0 39px; flex: none; color: #e8e8e8; }
.timer { font-size: 17px; color: #c8c8c8; width: 676px; flex: none; margin-top: 2px; }
.tb-group { display: flex; }
.tb-group.second { margin-left: 15px; }
.tbtn { width: 60px; height: 75px; display: flex; align-items: center; justify-content: center; position: relative; }
.tsvg { width: 26px; height: 26px; }
.tbtn.active::after { content: ""; position: absolute; left: 10px; right: 10px; bottom: 14px; height: 3px; border-radius: 2px; background: #9ea2ff; }
.tbtn.dim { color: #6e6e6e; }
.tbtn.white { color: #fff; }
.tdots { font-size: 15px; letter-spacing: 1px; color: #d8d8d8; }
.tdiv { width: 1px; height: 40px; background: #4d4d4d; margin-left: 16px; }
.leave { width: 131px; height: 40px; margin-left: 15px; background: #c4314b; color: #fff; border: 0; border-radius: 2px; font: 600 16px "Open Sans", sans-serif; display: flex; align-items: center; justify-content: center; gap: 10px; padding: 0; }
.hang { width: 24px; height: 14px; }

.m-body { flex: 1; display: flex; min-height: 0; }
.stage { width: 940px; flex: none; display: flex; flex-direction: column; padding-left: 5px; background: #1a1a1a; }
.video { width: 930px; height: 590px; background: #000; padding-top: 36px; flex: none; margin-top: 3px; position: relative; }
.video-name { color: #fff; font-size: 14px; padding: 0 0 0 17px; line-height: 20px; margin-top: -4px; position: relative; }

/* onenote */
.onenote { width: 930px; height: 523px; display: flex; flex-direction: column; background: #fff; filter: blur(.35px); color: #333; }
.on-title { height: 25px; background: #444446; display: grid; grid-template-columns: 1fr auto 1fr; align-items: center; padding: 0 9px 0 14px; color: #eee; font-size: 9px; }
.qa { display: flex; align-items: center; gap: 7px; }
.q { width: 12px; height: 12px; flex: none; display: block; }
.q.round { background: #eee; border-radius: 50%; }
.q.round.wide-l { margin-left: 7px; }
.q.circ { border: 1px solid #eee; border-radius: 50%; }
.q.circ.thin { opacity: .7; }
.q.eraser { background: #eee; transform: rotate(-40deg) scaleY(.6); }
.q-ic { width: 13px; height: 13px; flex: none; }
.q-a { color: #777; font-size: 12px; width: 12px; margin-left: 9px; }
.q-caret { color: #aaa; font-size: 8px; margin-left: 10px; }
.on-name { white-space: nowrap; font-size: 9.500px; }
.on-user { display: flex; align-items: center; justify-content: flex-end; white-space: nowrap; }
.on-av { width: 18px; height: 18px; border-radius: 50%; background: #ddd; color: #888; font-size: 7px; display: flex; align-items: center; justify-content: center; margin: 0 0 0 8px; }
.on-w { width: 13px; height: 13px; margin-left: 21px; }
.on-w.f { margin-left: 18px; }
.on-tabs { height: 22px; background: #444446; display: flex; padding-left: 6px; color: #eee; font-size: 10px; align-items: center; position: relative; }
.tab { padding: 0 7px; line-height: 22px; flex: none; }
.tab.t-file { margin-right: 7px; }
.tab.t-hist { padding-right: 5px; }
.tab.on { background: #adadad; color: #444; }
.tab-share { position: absolute; right: 8px; top: 5px; width: 10px; height: 11px; background: #ddd; border-radius: 1px; box-shadow: -3px -2px 0 #999; }
.ribbon { height: 67px; background: #ababab; display: flex; position: relative; padding-left: 5px; flex: none; }
.rg { display: flex; flex-direction: column; border-right: 1px solid #949494; height: 64px; margin-top: 3px; flex: none; }
.rg-body { flex: 1; display: flex; min-height: 0; }
.rg-body.center { justify-content: center; }
.rg-body.pad-e { padding-left: 3px; }
.rg-body.pad-c { padding-left: 6px; }
.rg-label { height: 13px; line-height: 13px; font-size: 8.500px; text-align: center; color: #444; }
.rg-tools { width: 461px; }
.rg-shapes { width: 99px; }
.rg-edit { width: 135px; }
.rg-convert { width: 72px; }
.ri { width: 30px; flex: none; display: flex; flex-direction: column; align-items: center; font-size: 8.800px; line-height: 12px; text-align: center; color: #333; white-space: nowrap; }
.ri-ic { width: 22px; height: 24px; margin-bottom: 2px; flex: none; }
.ri > span:last-child { display: block; }
.ri-type { font-size: 16px; line-height: 26px; height: 26px; color: #555; font-family: "Liberation Serif", serif; display: flex; align-items: flex-start; white-space: nowrap; }
.cursor { width: 8px; height: 12px; margin-top: 10px; }
.ri.wide { width: 44px; }
.ri.wide2 { width: 40px; }
.ri.r31 { width: 32px; }
.ri.r30 { width: 30px; }
.ri.off { color: #8a8a8a; }
.ink { font-size: 25px; line-height: 26px; height: 26px; color: #333; font-family: "Liberation Serif", serif; white-space: nowrap; position: relative; display: block; }
.ink i { font-size: 12px; font-style: italic; }
.ink-arc { position: absolute; left: 4px; top: -1px; width: 14px; height: 6px; }
.gallery { width: 269px; height: 45px; display: grid; grid-template-columns: repeat(7, 34px); grid-template-rows: 18px 18px; gap: 5px 4.300px; background: #bcbcbc; padding: 2px 0 0 3px; margin: 1px 0 0 1px; flex: none; align-content: start; }
.p { width: 34px; height: 18px; background: #fff; display: block; }
.p.sel { outline: 2px solid #6b6b6b; }
.p-wrap { display: block; width: 34px; height: 18px; background: #fff; }
.p-wrap .p { background: transparent; }
.hl-g { background: linear-gradient(90deg, #00d400 78%, #fff 78%); }
.hl-m { background: linear-gradient(90deg, #ff16ee 78%, #fff 78%); }
.c0 { color: transparent; }
.c1 { color: #1e7a4e; } .c3 { color: #f03a3a; } .c5 { color: #eeeeee; } .c6 { color: #f7e017; } .c7 { color: #111; }
.c8 { color: #f4457f; } .c9 { color: #3a62c4; } .c10 { color: #1cc43a; } .c11 { color: #58c41a; } .c12 { color: #88c62a; } .c13 { color: #4a7ad8; }
.g-scroll { width: 10px; height: 45px; margin-top: 1px; display: flex; flex-direction: column; background: #c8c8c8; font-size: 6px; line-height: 15px; text-align: center; color: #444; flex: none; }
.shapes { width: 84px; height: 46px; }
.rb-collapse { position: absolute; right: 4px; bottom: 1px; font-size: 9px; line-height: 9px; color: #444; }
.on-page { flex: 1; position: relative; background: #fff; padding: 24px 0 0 53px; }
.note-text { font-family: Lato, "Open Sans", sans-serif; font-size: 16.250px; line-height: 21.400px; color: #111; }
.note-text .q-line { margin-bottom: 21.600px; }
.nb-tag { position: absolute; left: 688px; top: 0; width: 191px; height: 28px; background: #d6d6d6; display: flex; align-items: center; padding-left: 10px; font-size: 10px; color: #555; gap: 10px; white-space: nowrap; }
.nb-book { width: 16px; height: 12px; background: #fff; border: 1px solid #bbb; flex: none; }
.nb-name { flex: 1; }
.nb-chev { width: 12px; height: 12px; margin-right: 8px; flex: none; }
.nb-exp { position: absolute; left: 882px; top: 0; width: 28px; height: 28px; background: #d6d6d6; padding: 8px 0 0 8px; }
.vscroll { position: absolute; right: 0; top: 28px; width: 12px; bottom: 0; background: #c2c2c2; display: flex; flex-direction: column; font-size: 7px; line-height: 12px; text-align: center; color: #333; }
.v-btn { height: 12px; background: #a4a4a4; flex: none; }
.v-btn.end { margin-top: auto; }
.v-thumb { height: 12px; background: #888; margin-top: 87px; flex: none; }
.dot-mark { position: absolute; left: 487px; top: 262px; width: 2px; height: 2px; background: #888; }
.hscroll { height: 12px; background: #a09898; border-right: 12px solid #fff; position: relative; border-bottom: 2px solid #c4c4c4; flex: none; }
.h-thumb { position: absolute; right: 13px; top: 0; bottom: 0; width: 29px; background: #5e5860; }
.h-thumb-l { position: absolute; left: 10px; top: 0; bottom: 0; width: 55px; background: #6a666c; border-radius: 3px 3px 0 0; }

/* strip */
.strip { height: 119px; display: flex; align-items: center; padding-left: 64px; margin-top: 2px; flex: none; color: #fff; }
.slot { width: 105px; display: flex; justify-content: center; flex: none; }
.slot.last { width: 224px; }
.pav { width: 55px; height: 55px; border-radius: 50%; display: flex; align-items: center; justify-content: center; font-size: 20px; font-weight: 600; flex: none; }
.more { width: 53px; height: 53px; background: #6264a7; color: #fff; font-size: 18px; }
.nc, .ec { background: #cddbe0; color: #164650; }
.ej { background: #c8d6ea; color: #0a2f66; }
.vg { background: #fadfd8; color: #8e2f1e; }
.t4 { background: #f4d5df; color: #8a1c3d; }
.tile { width: 225px; height: 118px; background: radial-gradient(circle at 50% 45%, #5f6092 0, #47486f 100%); display: flex; align-items: center; justify-content: center; position: relative; flex: none; padding-bottom: 2px; }
.spk-ring { width: 78px; height: 78px; border-radius: 50%; border: 4px solid #9ea2ff; display: flex; align-items: center; justify-content: center; box-shadow: 0 6px 12px rgba(0,0,0,.3); }
.tile-name { position: absolute; left: 19px; bottom: 5px; font-size: 14px; color: #fff; text-shadow: 0 1px 2px rgba(0,0,0,.5); }

/* meeting chat */
.mchat { flex: 1; padding: 0 0 0 24px; background: #1f1f1f; display: flex; flex-direction: column; min-width: 0; }
.mc-head { height: 116px; display: flex; align-items: flex-start; justify-content: space-between; padding: 49px 38px 0 0; flex: none; }
.mc-head h2 { font-size: 19.300px; font-weight: 700; line-height: 30px; color: #fff; }
.mc-x { width: 16px; height: 16px; margin-top: 7px; }
.mc-list { display: flex; flex-direction: column; gap: 20px; flex: none; }
.mc-msg { display: flex; align-items: flex-start; }
.mc-av { width: 40px; height: 40px; border-radius: 50%; font-size: 16px; display: flex; align-items: center; justify-content: center; position: relative; margin-top: 13px; margin-left: 1px; margin-right: -12px; z-index: 1; flex: none; }
.ak { background: #fbeccb; color: #8a6a1c; }
.sa { background: #d2e4d8; color: #1f5c3c; }
.us { background: #cfdcee; color: #1f4a80; }
.pm { background: #f4d5df; color: #8a1c3d; }
.sk { background: #fbeccb; color: #8a6a1c; }
.busy, .off-st { position: absolute; right: -2px; bottom: 0; width: 16px; height: 16px; border-radius: 50%; background: #c4314b; border: 2px solid #232323; }
.off-st { background: #e8e8e8; border-width: 3px; }
.mc-bub { background: #292929; border-radius: 3px; height: 74px; padding: 12px 20px 0 20px; }
.mc-meta { display: flex; gap: 15px; font-size: 13.800px; line-height: 24px; color: #9a9a9a; white-space: nowrap; }
.mc-meta b { font-weight: 600; font-size: 14.800px; color: #adadad; }
.mc-text { font-size: 16.200px; line-height: 30px; color: #fff; }
.mc-input { width: 348px; height: 52px; margin: 42px 0 0 1px; background: #2d2d2d; border-radius: 3px; border-bottom: 3px solid #8b8cd8; padding: 2px 0 0 20px; display: flex; align-items: center; color: #b0b0b0; font-size: 16.500px; flex: none; }
.mc-tools { display: flex; align-items: center; height: 46px; padding-left: 8px; color: #c8c8c8; flex: none; }
.mt { width: 24px; height: 24px; margin-right: 16px; flex: none; }
.mt-dots { font-size: 9px; letter-spacing: 2px; width: 24px; padding-left: 6px; white-space: nowrap; }
.mt-send { width: 24px; height: 24px; margin-left: 85px; }

/* toast */
.toast { position: absolute; left: 1535px; top: 860px; width: 375px; height: 160px; background: #4e4f80; box-shadow: 0 3px 8px rgba(0,0,0,.3); color: #fff; }
.toast-main { height: 100px; background: #6264a7; display: flex; align-items: flex-start; padding: 19px 0 0 20px; position: relative; }
.toast-av { width: 55px; height: 55px; border-radius: 50%; background: #f4d5df; color: #8a1c3d; font-size: 20px; font-weight: 600; display: flex; align-items: center; justify-content: center; flex: none; margin-right: 20px; }
.toast-text { flex: 1; margin-top: -1px; }
.toast-title { font-size: 16.600px; line-height: 24px; white-space: nowrap; }
.toast-sub { font-size: 14px; line-height: 20px; opacity: .95; }
.toast-ic { position: absolute; right: 17px; top: 14px; width: 22px; height: 22px; color: #e8e8f4; }
.toast-reply { height: 55px; background: #565792; display: flex; align-items: center; font-size: 16px; padding-left: 17px; gap: 19px; }
.reply-ic { width: 20px; height: 20px; }
```
